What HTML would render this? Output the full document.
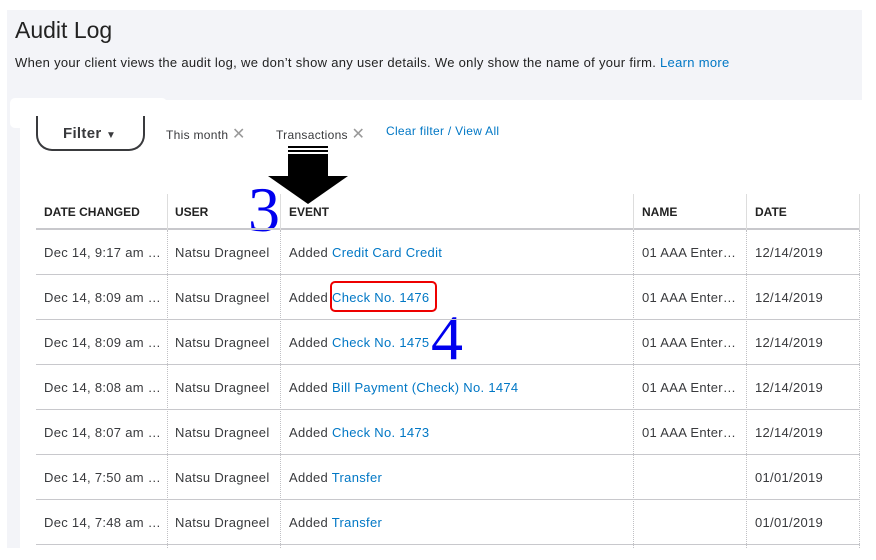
<!DOCTYPE html>
<html><head><style>
*{margin:0;padding:0;box-sizing:border-box}
body{width:876px;height:560px;background:#fff;position:relative;overflow:hidden;font-family:"Liberation Sans",sans-serif;color:#393a3d;letter-spacing:0.3px}
.abs{position:absolute}
.link{color:#0077c5}
.cell{position:absolute;font-size:13px;white-space:nowrap}
.hl{position:absolute;left:36px;width:824px;height:1px;background:#c8c8cc}
.vl{position:absolute;width:0;border-left:1px dotted #c0c0c4}
.hd{position:absolute;top:205px;font-size:12px;font-weight:bold;color:#222;letter-spacing:0}
</style></head><body>
<div class="abs" style="left:7px;top:10px;width:855px;height:90px;background:#f3f4f8"></div>
<div class="abs" style="left:7px;top:100px;width:13px;height:448px;background:#f3f4f8"></div>
<div class="abs" style="left:10px;top:98px;width:157px;height:30px;background:#fff;border-radius:5px"></div>
<div class="abs" style="left:20px;top:128px;width:842px;height:432px;background:#fff"></div>
<div class="abs" style="left:15px;top:17px;font-size:23px;color:#222;letter-spacing:0">Audit Log</div>
<div class="abs" style="left:15px;top:55px;font-size:13px;color:#222">When your client views the audit log, we don’t show any user details. We only show the name of your firm. <span class="link">Learn more</span></div>
<div class="abs" style="left:36px;top:116px;width:109px;height:35px;border:2px solid #393a3d;border-top:none;border-radius:0 0 16px 16px;font-weight:bold;font-size:15px;padding:9px 0 0 25px;color:#393a3d">Filter <span style="font-size:10px">▼</span></div>
<div class="cell" style="left:166px;top:124px;font-size:12px">This month <span style="color:#999;font-size:16px">✕</span></div>
<div class="cell" style="left:276px;top:124px;font-size:12px">Transactions <span style="color:#999;font-size:16px">✕</span></div>
<div class="cell link" style="left:386px;top:124px;font-size:12px">Clear filter / View All</div>
<svg class="abs" style="left:266px;top:146px" width="84" height="60"><rect x="22" y="0" width="40" height="2" fill="#000"/><rect x="22" y="4" width="40" height="2" fill="#000"/><rect x="22" y="8" width="40" height="22" fill="#000"/><polygon points="2,30 82,30 42,58" fill="#000"/></svg>
<div class="abs" style="left:248px;top:180px;font-family:'Liberation Serif',serif;font-size:64px;color:#0000ee;line-height:60px;letter-spacing:0">3</div>
<div class="abs" style="left:431px;top:308px;font-family:'Liberation Serif',serif;font-size:64px;color:#0000ee;line-height:60px;letter-spacing:0">4</div>
<div class="hd" style="left:44px">DATE CHANGED</div>
<div class="hd" style="left:175px">USER</div>
<div class="hd" style="left:289px">EVENT</div>
<div class="hd" style="left:642px">NAME</div>
<div class="hd" style="left:755px">DATE</div>
<div class="abs" style="left:36px;top:228px;width:824px;height:2px;background:#c8c8cc"></div>
<div class="abs" style="left:167px;top:194px;width:1px;height:36px;background:#ddd"></div>
<div class="abs" style="left:280px;top:194px;width:1px;height:36px;background:#ddd"></div>
<div class="abs" style="left:633px;top:194px;width:1px;height:36px;background:#ddd"></div>
<div class="abs" style="left:746px;top:194px;width:1px;height:36px;background:#ddd"></div>
<div class="abs" style="left:859px;top:194px;width:1px;height:36px;background:#ddd"></div>
<div class="vl" style="left:167px;top:230px;height:318px"></div>
<div class="vl" style="left:280px;top:230px;height:318px"></div>
<div class="vl" style="left:633px;top:230px;height:318px"></div>
<div class="vl" style="left:746px;top:230px;height:318px"></div>
<div class="vl" style="left:859px;top:230px;height:318px"></div>
<div class="hl" style="top:274px"></div><div class="hl" style="top:319px"></div><div class="hl" style="top:364px"></div><div class="hl" style="top:409px"></div><div class="hl" style="top:454px"></div><div class="hl" style="top:499px"></div><div class="hl" style="top:544px"></div>

<div class="cell" style="left:44px;top:245px">Dec 14, 9:17 am …</div><div class="cell" style="left:175px;top:245px">Natsu Dragneel</div><div class="cell" style="left:289px;top:245px">Added <span class="link">Credit Card Credit</span></div><div class="cell" style="left:642px;top:245px">01 AAA Enter…</div><div class="cell" style="left:755px;top:245px">12/14/2019</div>
<div class="cell" style="left:44px;top:290px">Dec 14, 8:09 am …</div><div class="cell" style="left:175px;top:290px">Natsu Dragneel</div><div class="cell" style="left:289px;top:290px">Added <span class="link">Check No. 1476</span></div><div class="cell" style="left:642px;top:290px">01 AAA Enter…</div><div class="cell" style="left:755px;top:290px">12/14/2019</div>
<div class="abs" style="left:330px;top:281px;width:107px;height:31px;border:2px solid #e00;border-radius:5px"></div>
<div class="cell" style="left:44px;top:335px">Dec 14, 8:09 am …</div><div class="cell" style="left:175px;top:335px">Natsu Dragneel</div><div class="cell" style="left:289px;top:335px">Added <span class="link">Check No. 1475</span></div><div class="cell" style="left:642px;top:335px">01 AAA Enter…</div><div class="cell" style="left:755px;top:335px">12/14/2019</div>
<div class="cell" style="left:44px;top:380px">Dec 14, 8:08 am …</div><div class="cell" style="left:175px;top:380px">Natsu Dragneel</div><div class="cell" style="left:289px;top:380px">Added <span class="link">Bill Payment (Check) No. 1474</span></div><div class="cell" style="left:642px;top:380px">01 AAA Enter…</div><div class="cell" style="left:755px;top:380px">12/14/2019</div>
<div class="cell" style="left:44px;top:425px">Dec 14, 8:07 am …</div><div class="cell" style="left:175px;top:425px">Natsu Dragneel</div><div class="cell" style="left:289px;top:425px">Added <span class="link">Check No. 1473</span></div><div class="cell" style="left:642px;top:425px">01 AAA Enter…</div><div class="cell" style="left:755px;top:425px">12/14/2019</div>
<div class="cell" style="left:44px;top:470px">Dec 14, 7:50 am …</div><div class="cell" style="left:175px;top:470px">Natsu Dragneel</div><div class="cell" style="left:289px;top:470px">Added <span class="link">Transfer</span></div><div class="cell" style="left:755px;top:470px">01/01/2019</div>
<div class="cell" style="left:44px;top:515px">Dec 14, 7:48 am …</div><div class="cell" style="left:175px;top:515px">Natsu Dragneel</div><div class="cell" style="left:289px;top:515px">Added <span class="link">Transfer</span></div><div class="cell" style="left:755px;top:515px">01/01/2019</div>
</body></html>
